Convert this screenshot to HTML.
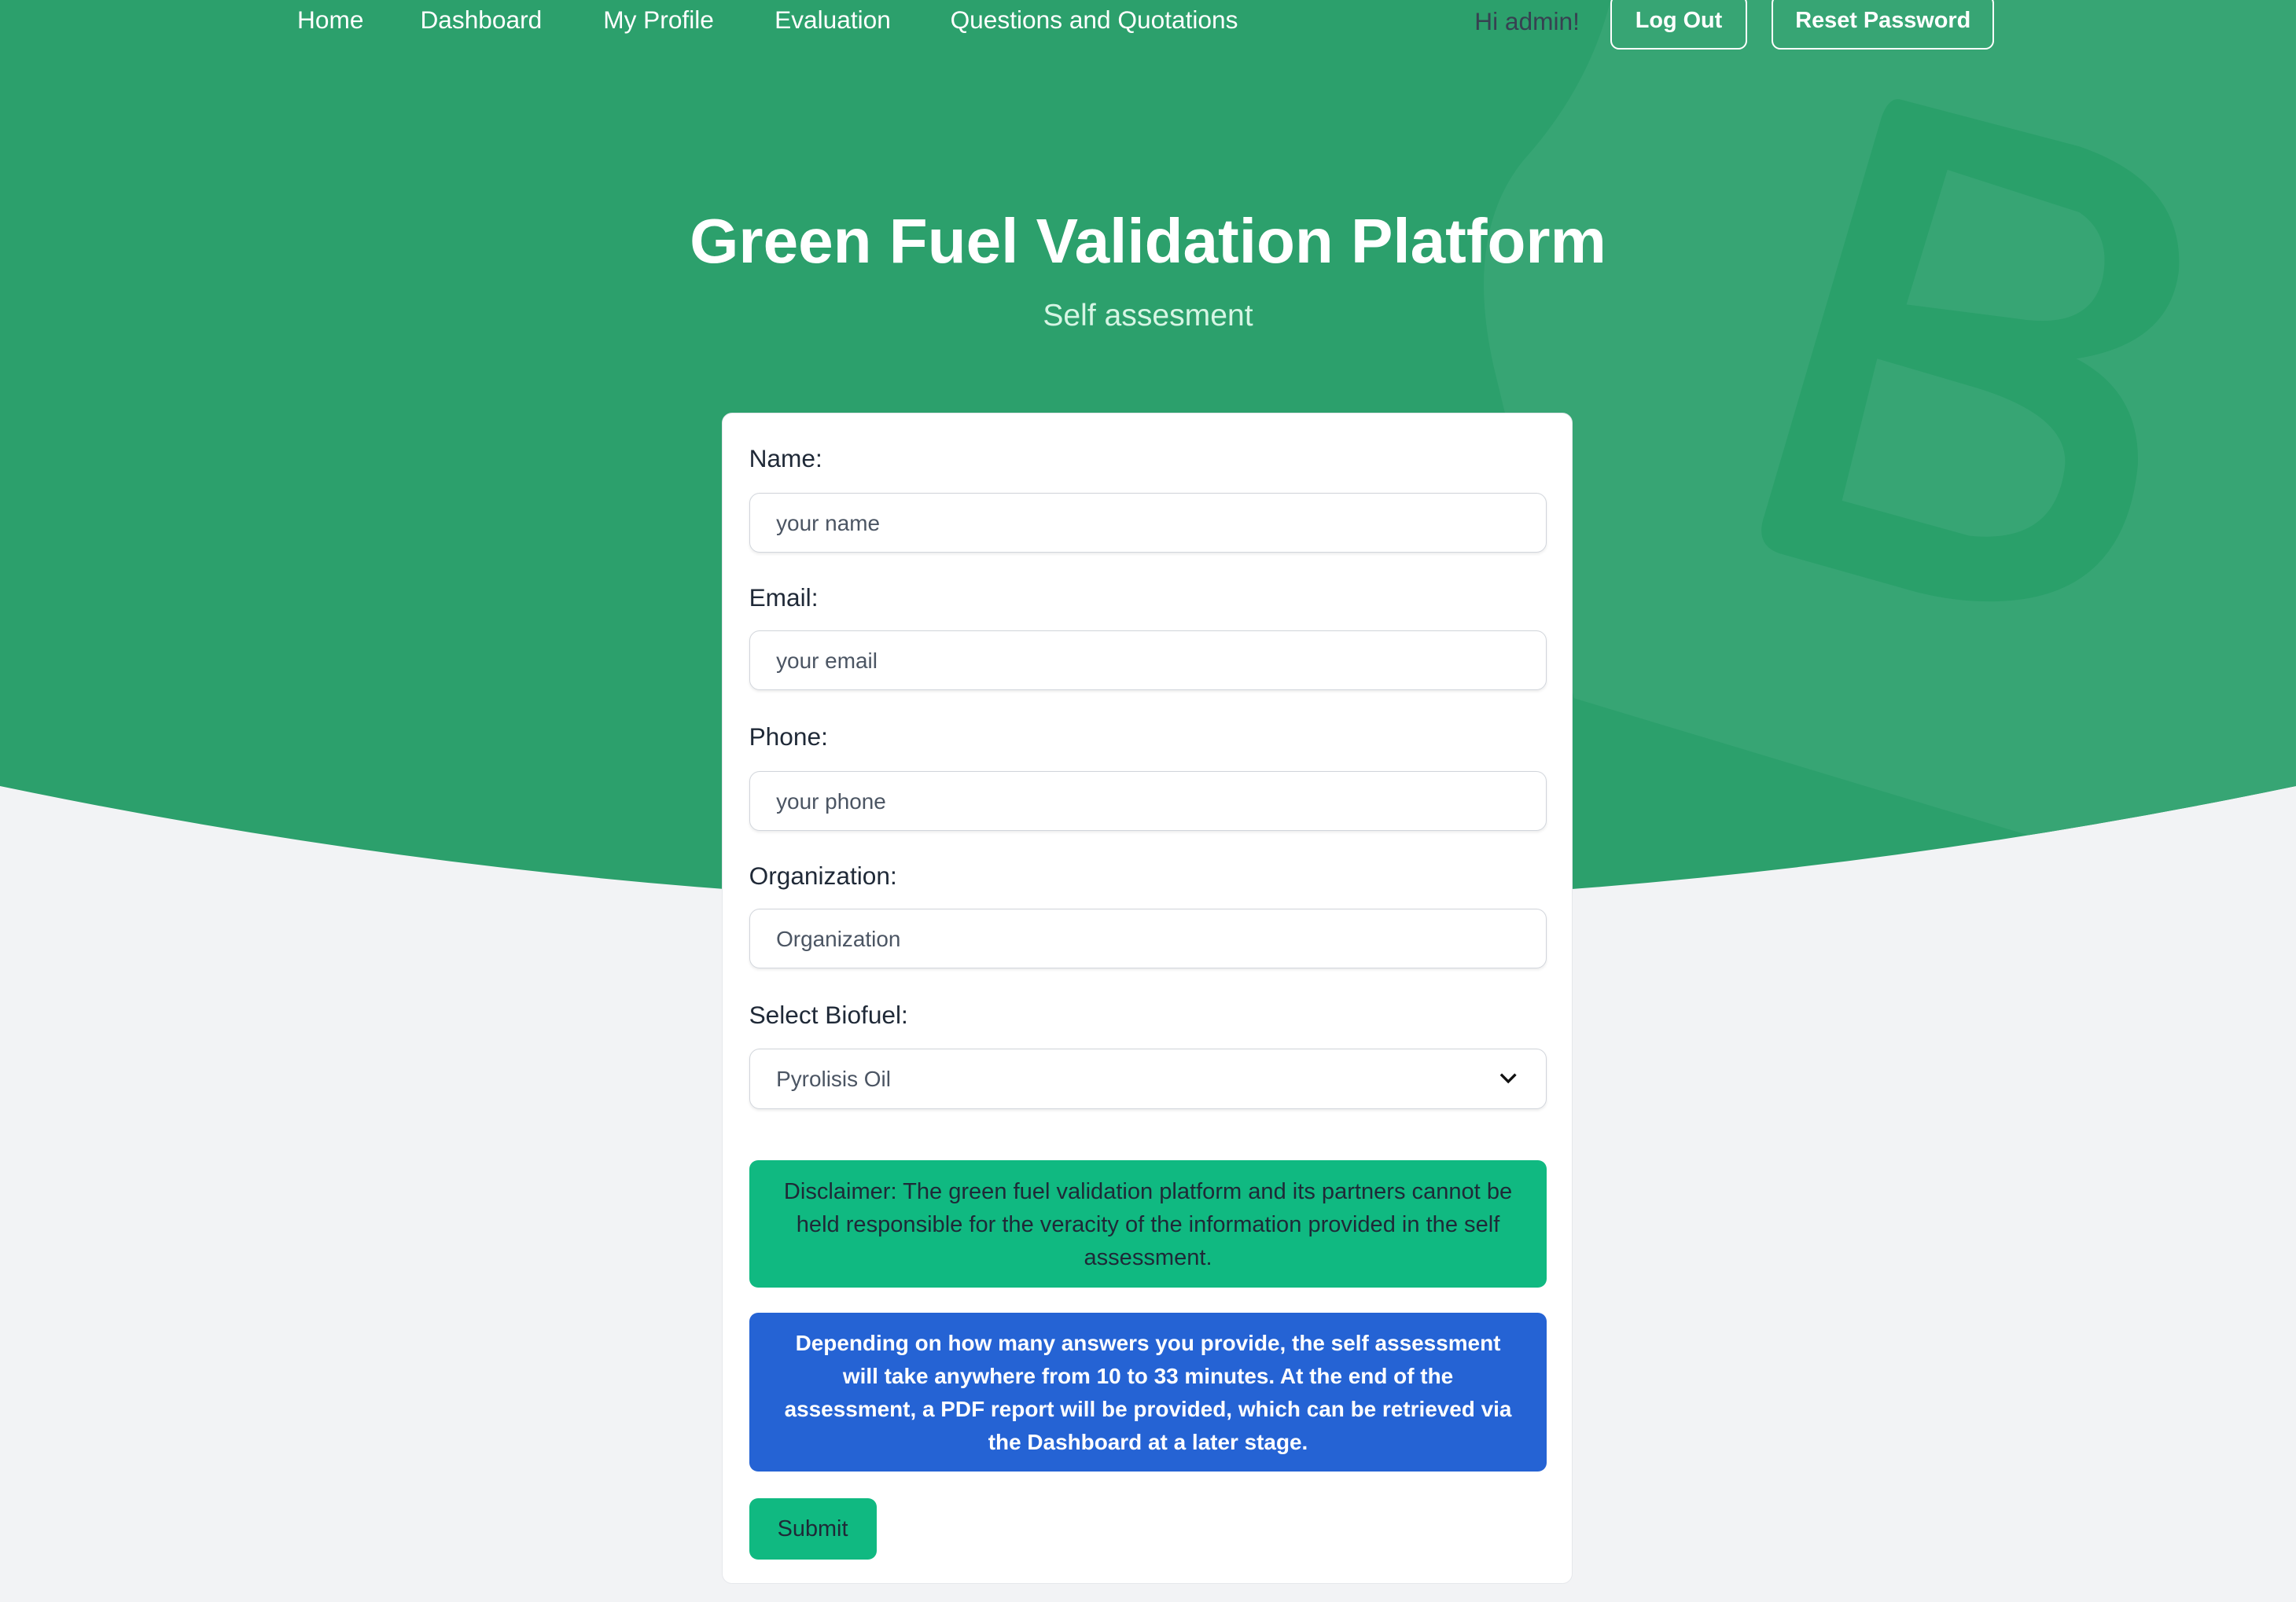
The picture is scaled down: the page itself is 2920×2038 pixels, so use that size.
<!DOCTYPE html>
<html><head><meta charset="utf-8"><style>
html,body{margin:0;padding:0;width:2920px;height:2038px;overflow:hidden;background:#f2f3f5}
#w{zoom:1.8622;position:relative;width:1568px;height:1094px;font-family:"Liberation Sans",sans-serif}
.a{position:absolute;white-space:nowrap}
.nav{color:#fff;font-size:17px;top:4px}
.btn{position:absolute;border:1.5px solid #fff;border-radius:6px;color:#fff;font-size:15.5px;font-weight:bold;text-align:center;line-height:34px;top:-4px;height:38px;box-sizing:border-box}
.lbl{position:absolute;left:18px;font-size:17px;color:#1f2937}
.inp{position:absolute;left:18px;width:545px;height:41px;box-sizing:border-box;border:1px solid #d1d5db;border-radius:7px;box-shadow:0 1px 2px rgba(0,0,0,.08);font-size:15px;color:#4b5563;padding-left:18px;line-height:41px}
.box{position:absolute;left:18px;width:545px;box-sizing:border-box;border-radius:6px;text-align:center;font-size:15px;white-space:normal}
</style></head><body><div id="w">
<svg class="a" style="left:0;top:0" width="1568" height="1094">
<defs><clipPath id="c"><path d="M0 0H1568V537Q784 700 0 537Z"/></clipPath></defs>
<path d="M0 0H1568V537Q784 700 0 537Z" fill="#2ca06c"/>
<g clip-path="url(#c)">
<path d="M1100 0H1568V700L1390 572L1075 477L1020 250Q1000 160 1040 110Q1085 60 1100 0Z" fill="#37a574"/>
<path fill="#2aa06a" fill-rule="evenodd" d="M1298 68L1420 100Q1492 125 1488 185Q1482 235 1418 245Q1462 268 1460 318Q1450 420 1340 410Q1320 408 1300 402L1215 378Q1198 372 1205 352L1285 80Q1290 66 1298 68Z M1330 116L1420 145Q1442 160 1436 190Q1428 225 1380 218L1302 208Z M1282 245L1350 265Q1415 285 1410 320Q1403 372 1345 366L1258 342Z"/>
</g>
</svg>
<span class="a nav" style="left:203px">Home</span>
<span class="a nav" style="left:287px">Dashboard</span>
<span class="a nav" style="left:412px">My Profile</span>
<span class="a nav" style="left:529px">Evaluation</span>
<span class="a nav" style="left:649px">Questions and Quotations</span>
<span class="a" style="left:1007px;top:5px;font-size:17px;color:#374151">Hi admin!</span>
<div class="btn" style="left:1100px;width:93px">Log Out</div>
<div class="btn" style="left:1210px;width:152px">Reset Password</div>
<div class="a" style="left:0;width:1568px;text-align:center;top:140px;font-size:43px;font-weight:bold;color:#fff">Green Fuel Validation Platform</div>
<div class="a" style="left:0;width:1568px;text-align:center;top:204px;font-size:21px;color:#d6f5e4">Self assesment</div>
<div class="a" style="left:493px;top:282px;width:581px;height:800px;background:#fff;border:1px solid #e5e7eb;border-radius:7px;box-sizing:border-box">
<div class="lbl" style="top:21px">Name:</div>
<div class="inp" style="top:54px">your name</div>
<div class="lbl" style="top:116px">Email:</div>
<div class="inp" style="top:148px">your email</div>
<div class="lbl" style="top:211px">Phone:</div>
<div class="inp" style="top:244px">your phone</div>
<div class="lbl" style="top:306px">Organization:</div>
<div class="inp" style="top:338px">Organization</div>
<div class="lbl" style="top:401px">Select Biofuel:</div>
<div class="inp" style="top:434px">Pyrolisis Oil<svg style="position:absolute;right:20px;top:15px" width="12" height="10"><path d="M1 2L6 7L11 2" fill="none" stroke="#111" stroke-width="1.8"/></svg></div>
<div class="box" style="top:510px;height:87px;background:#10b981;color:#1f2937;line-height:22.5px;padding:11px 14px 0;font-size:15.6px">Disclaimer: The green fuel validation platform and its partners cannot be held responsible for the veracity of the information provided in the self assessment.</div>
<div class="box" style="top:614px;height:109px;background:#2563d4;color:#fff;font-weight:bold;line-height:22.5px;padding:10px 18px 0">Depending on how many answers you provide, the self assessment will take anywhere from 10 to 33 minutes. At the end of the assessment, a PDF report will be provided, which can be retrieved via the Dashboard at a later stage.</div>
<div class="box" style="top:741px;width:87px;height:42px;background:#10b981;color:#1f2937;line-height:42px;font-size:15.5px">Submit</div>
</div>
</div></body></html>
